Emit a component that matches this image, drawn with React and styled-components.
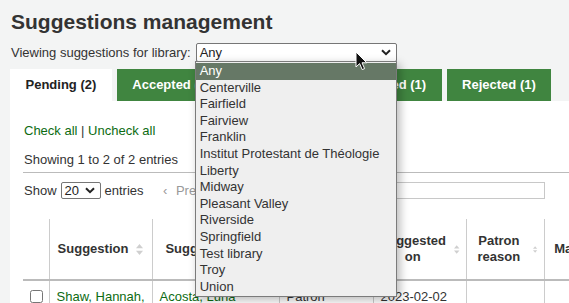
import React from 'react';
import styled, { createGlobalStyle } from 'styled-components';

const libraries = [
  'Any',
  'Centerville',
  'Fairfield',
  'Fairview',
  'Franklin',
  'Institut Protestant de Théologie',
  'Liberty',
  'Midway',
  'Pleasant Valley',
  'Riverside',
  'Springfield',
  'Test library',
  'Troy',
  'Union',
];

const tabs = [
  { label: 'Pending (2)', active: true },
  { label: 'Accepted (1)' },
  { label: 'Checked (1)' },
  { label: 'Ordered (1)' },
  { label: 'Rejected (1)' },
];

const columns = [
  { label: '', width: 26 },
  { label: 'Suggestion', width: 103, sort: true },
  { label: 'Suggested by', width: 127, sort: true },
  { label: 'Type', width: 94, sort: true },
  { label: 'Suggested on', width: 93, sort: true },
  { label: 'Patron reason', width: 78, sort: true },
  { label: 'Managed by', width: 110, sort: true },
];

function Chevron() {
  return (
    <svg width="10" height="7" viewBox="0 0 10 7">
      <path d="M1 1.2 L5 5.2 L9 1.2" fill="none" stroke="#222" strokeWidth="2" />
    </svg>
  );
}

function SortIcon() {
  return (
    <svg width="7" height="11" viewBox="0 0 7 11">
      <path d="M3.5 0 L7 4.2 L0 4.2 Z" fill="#cfcfcf" />
      <path d="M3.5 11 L7 6.8 L0 6.8 Z" fill="#cfcfcf" />
    </svg>
  );
}

function Cursor() {
  return (
    <svg width="13" height="20" viewBox="0 0 13 20">
      <path
        d="M1 1 L1 16 L4.6 12.6 L7.2 18.6 L9.6 17.6 L7 11.8 L11.8 11.8 Z"
        fill="#111"
        stroke="#fff"
        strokeWidth="1"
        strokeLinejoin="round"
      />
    </svg>
  );
}

export default function App() {
  return (
    <>
      <GlobalStyle />
      <Page>
        <Title>Suggestions management</Title>
        <FilterRow>
          <span>Viewing suggestions for library:</span>
          <SelectWrap>
            <SelectBox $width={201} $height={19}>
              <span>Any</span>
              <Chevron />
            </SelectBox>
            <Options>
              {libraries.map((lib, i) => (
                <Option key={lib} $selected={i === 0}>{lib}</Option>
              ))}
            </Options>
            <Pointer>
              <Cursor />
            </Pointer>
          </SelectWrap>
        </FilterRow>

        <Tabs>
          {tabs.map((t) => (
            <Tab key={t.label} $active={t.active}>{t.label}</Tab>
          ))}
        </Tabs>

        <Panel>
          <CheckLinks>
            <Link>Check all</Link> | <Link>Uncheck all</Link>
          </CheckLinks>
          <Info>Showing 1 to 2 of 2 entries</Info>
          <Controls>
            <Length>
              Show
              <SelectBox $width={40} $height={17}>
                <span>20</span>
                <Chevron />
              </SelectBox>
              entries
            </Length>
            <Pager>‹ <span>Prev</span></Pager>
            <Search />
          </Controls>

          <Table>
            <colgroup>
              {columns.map((c, i) => (
                <col key={i} style={{ width: c.width }} />
              ))}
            </colgroup>
            <thead>
              <tr>
                {columns.map((c, i) => (
                  <Th key={i}>
                    {c.sort && (
                      <HeadInner>
                        <span>{c.label}</span>
                        <SortIcon />
                      </HeadInner>
                    )}
                  </Th>
                ))}
              </tr>
            </thead>
            <tbody>
              <tr>
                <Td $center><Check type="checkbox" /></Td>
                <Td><Link>Shaw, Hannah,</Link></Td>
                <Td><Link>Acosta, Luna</Link></Td>
                <Td>Patron</Td>
                <Td>2023-02-02</Td>
                <Td></Td>
                <Td></Td>
              </tr>
            </tbody>
          </Table>
        </Panel>
      </Page>
    </>
  );
}

const GlobalStyle = createGlobalStyle`
  html, body {
    margin: 0;
    background: #f3f4f4;
    overflow: hidden;
  }
  body {
    font-family: "Liberation Sans", Arial, sans-serif;
    font-size: 13px;
    color: #333;
  }
`;

const Page = styled.div`
  padding: 10px 0 0 10px;
  width: 700px;
`;

const Title = styled.h1`
  margin: 0 0 0 1px;
  font-size: 21px;
  line-height: 24px;
  font-weight: bold;
  color: #333;
`;

const FilterRow = styled.div`
  display: flex;
  align-items: center;
  gap: 5px;
  margin: 9px 0 0 1px;
  height: 19px;
`;

const SelectWrap = styled.div`
  position: relative;
`;

const SelectBox = styled.div`
  box-sizing: border-box;
  width: ${(p) => p.$width}px;
  height: ${(p) => p.$height}px;
  display: flex;
  align-items: center;
  justify-content: space-between;
  padding: 0 5px 0 3px;
  background: #fff;
  border: 1px solid #767676;
  border-radius: 2px;
  font-size: 13px;
  color: #222;
`;

const Options = styled.ul`
  position: absolute;
  top: 18px;
  left: -1px;
  width: 202px;
  box-sizing: border-box;
  margin: 0;
  padding: 1px 0;
  list-style: none;
  background: #efefef;
  border: 1px solid #7b7b7b;
  box-shadow: 3px 3px 9px rgba(0, 0, 0, 0.28);
  z-index: 10;
`;

const Option = styled.li`
  height: 16.6px;
  line-height: 16.6px;
  padding: 0 4px;
  white-space: nowrap;
  color: ${(p) => (p.$selected ? '#fff' : '#333')};
  background: ${(p) => (p.$selected ? '#667866' : 'transparent')};
`;

const Pointer = styled.div`
  position: absolute;
  left: 159px;
  top: 8px;
  z-index: 11;
  line-height: 0;
`;

const Tabs = styled.div`
  display: flex;
  gap: 5px;
  margin-top: 7px;
`;

const Tab = styled.div`
  height: 32px;
  line-height: 32px;
  padding: 0 15.5px;
  font-weight: bold;
  font-size: 13px;
  white-space: nowrap;
  background: ${(p) => (p.$active ? '#fff' : '#408540')};
  color: ${(p) => (p.$active ? '#222' : '#fff')};
`;

const Panel = styled.div`
  background: #fff;
  padding: 21px 0 0 13px;
  height: 220px;
`;

const Link = styled.span`
  color: #0d6b12;
`;

const CheckLinks = styled.div`
  line-height: 18px;
  margin-left: 1px;
`;

const Info = styled.div`
  margin-top: 11px;
  line-height: 18px;
  padding: 0 0 3px 1px;
  border-bottom: 1px solid #bbb;
`;

const Controls = styled.div`
  display: grid;
  grid-template-columns: 140px 232px 150px;
  align-items: center;
  margin-top: 8px;
  height: 19px;
`;

const Length = styled.div`
  display: flex;
  align-items: center;
  gap: 4px;
  margin-left: 1px;
`;

const Pager = styled.div`
  color: #999;
  span {
    margin-left: 5px;
  }
`;

const Search = styled.div`
  height: 17px;
  border: 1px solid #c8c8c8;
  box-sizing: border-box;
`;

const Table = styled.table`
  margin-top: 19px;
  border-collapse: collapse;
  table-layout: fixed;
  width: 631px;
`;

const Th = styled.th`
  height: 60px;
  padding: 0 6px;
  font-size: 13px;
  font-weight: bold;
  color: #333;
  text-align: center;
  border-left: 1px solid #ccc;
  border-bottom: 2px solid #bbb;
  &:first-child {
    border-left: none;
  }
`;

const HeadInner = styled.div`
  display: flex;
  align-items: center;
  justify-content: center;
  gap: 8px;
  line-height: 16px;
`;

const Td = styled.td`
  padding: 8px 7px;
  vertical-align: top;
  line-height: 16px;
  white-space: nowrap;
  overflow: hidden;
  border-left: 1px solid #ccc;
  text-align: ${(p) => (p.$center ? 'center' : 'left')};
  &:first-child {
    border-left: none;
  }
`;

const Check = styled.input`
  margin: 1px 0 0;
  width: 13px;
  height: 13px;
`;
